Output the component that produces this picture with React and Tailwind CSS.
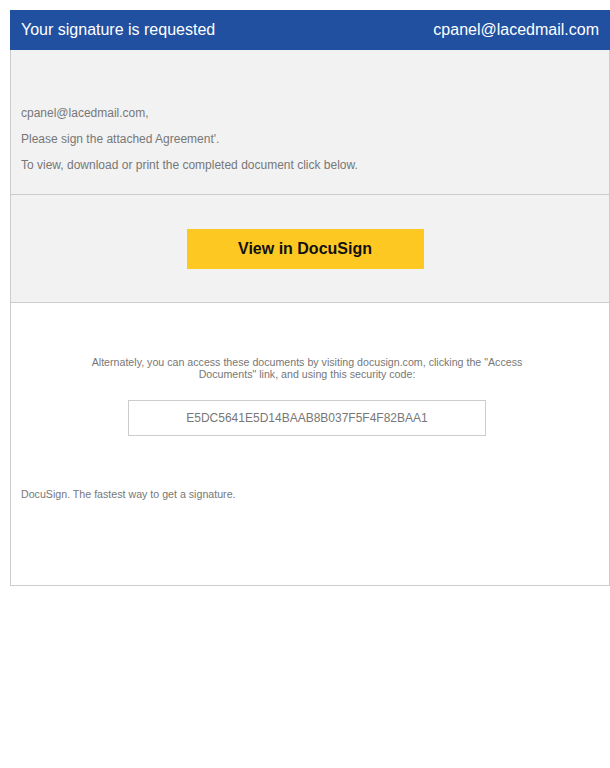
import React from "react";

const App = () => {
  const code = "E5DC5641E5D14BAAB8B037F5F4F82BAA1";

  return (
    <div className="min-h-screen bg-white pt-[10px] pl-[10px] font-['Liberation_Sans',Arial,sans-serif]">
      <div className="w-[600px]">
        {/* Header */}
        <div className="h-[40px] bg-[#2150a0] px-[11px] flex items-center justify-between text-white text-[16px]">
          <span>Your signature is requested</span>
          <span>cpanel@lacedmail.com</span>
        </div>

        <div className="border-x border-b border-[#cccccc]">
          {/* Message */}
          <div className="bg-[#f2f2f2] pt-[54px] pb-[12px] px-[10px] text-[12px] leading-[18px] text-[#777777]">
            <p className="mb-[8px]">cpanel@lacedmail.com,</p>
            <p className="mb-[8px]">Please sign the attached Agreement'.</p>
            <p className="mb-[8px]">To view, download or print the completed document click below.</p>
          </div>

          {/* Button */}
          <div className="bg-[#f2f2f2] border-y border-[#cccccc] flex justify-center pt-[34px] pb-[33px] pr-[10px]">
            <div className="w-[237px] h-[40px] bg-[#fec823] flex items-center justify-center text-[16px] font-bold text-[#111111]">
              View in DocuSign
            </div>
          </div>

          {/* Alternate access */}
          <div className="bg-white pt-[53px] pb-[84px] pl-[10px] pr-[16px]">
            <p className="mx-auto w-[440px] text-center text-[10.65px] leading-[12px] text-[#777777]">
              Alternately, you can access these documents by visiting docusign.com, clicking the "Access Documents" link, and using this security code:
            </p>
            <div className="mx-auto mt-[20px] w-[358px] h-[36px] border border-[#cccccc] flex items-center justify-center text-[12px] text-[#777777]">
              {code}
            </div>
            <p className="mt-[52px] text-[10.65px] leading-[13px] text-[#777777]">
              DocuSign. The fastest way to get a signature.
            </p>
          </div>
        </div>
      </div>
    </div>
  );
};

export default App;
